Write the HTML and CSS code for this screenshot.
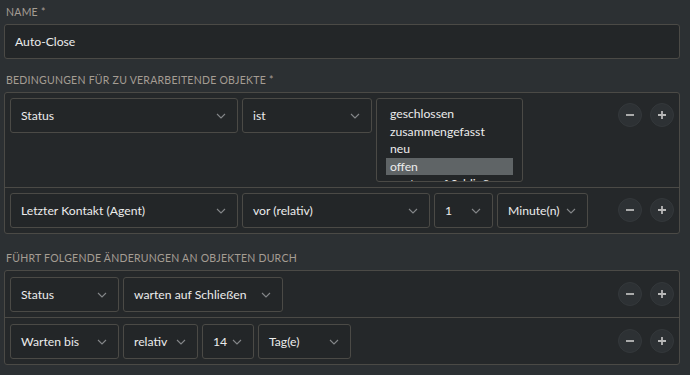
FILE: index.html
```html
<!DOCTYPE html>
<html lang="de">
<head>
<meta charset="utf-8">
<title>Auto-Close</title>
<link rel="stylesheet" href="styles.css">
</head>
<body>
<div class="form">
  <div class="label first">NAME *</div>
  <div class="input">Auto-Close</div>

  <div class="label">BEDINGUNGEN FÜR ZU VERARBEITENDE OBJEKTE *</div>
  <div class="group">
    <div class="row">
      <div class="select w228"><span>Status</span><svg class="chev" viewBox="0 0 10 6"><path d="M1 1L5 5L9 1"/></svg></div>
      <div class="select w130"><span>ist</span><svg class="chev" viewBox="0 0 10 6"><path d="M1 1L5 5L9 1"/></svg></div>
      <div class="multi">
        <div class="opt">geschlossen</div>
        <div class="opt">zusammengefasst</div>
        <div class="opt">neu</div>
        <div class="opt sel">offen</div>
        <div class="opt">warten auf Schließen</div>
      </div>
      <div class="btns">
        <div class="circle"><svg viewBox="0 0 10 10"><path d="M1 5H9"/></svg></div>
        <div class="circle"><svg viewBox="0 0 10 10"><path d="M1 5H9M5 1V9"/></svg></div>
      </div>
    </div>
    <div class="row">
      <div class="select w228"><span>Letzter Kontakt (Agent)</span><svg class="chev" viewBox="0 0 10 6"><path d="M1 1L5 5L9 1"/></svg></div>
      <div class="select w188"><span>vor (relativ)</span><svg class="chev" viewBox="0 0 10 6"><path d="M1 1L5 5L9 1"/></svg></div>
      <div class="select w59"><span>1</span><svg class="chev" viewBox="0 0 10 6"><path d="M1 1L5 5L9 1"/></svg></div>
      <div class="select w91"><span>Minute(n)</span><svg class="chev" viewBox="0 0 10 6"><path d="M1 1L5 5L9 1"/></svg></div>
      <div class="btns">
        <div class="circle"><svg viewBox="0 0 10 10"><path d="M1 5H9"/></svg></div>
        <div class="circle"><svg viewBox="0 0 10 10"><path d="M1 5H9M5 1V9"/></svg></div>
      </div>
    </div>
  </div>

  <div class="label third">FÜHRT FOLGENDE ÄNDERUNGEN AN OBJEKTEN DURCH</div>
  <div class="group actions">
    <div class="row">
      <div class="select w109"><span>Status</span><svg class="chev" viewBox="0 0 10 6"><path d="M1 1L5 5L9 1"/></svg></div>
      <div class="select w160"><span>warten auf Schließen</span><svg class="chev" viewBox="0 0 10 6"><path d="M1 1L5 5L9 1"/></svg></div>
      <div class="btns">
        <div class="circle"><svg viewBox="0 0 10 10"><path d="M1 5H9"/></svg></div>
        <div class="circle"><svg viewBox="0 0 10 10"><path d="M1 5H9M5 1V9"/></svg></div>
      </div>
    </div>
    <div class="row">
      <div class="select w109"><span>Warten bis</span><svg class="chev" viewBox="0 0 10 6"><path d="M1 1L5 5L9 1"/></svg></div>
      <div class="select w75"><span>relativ</span><svg class="chev" viewBox="0 0 10 6"><path d="M1 1L5 5L9 1"/></svg></div>
      <div class="select w52"><span>14</span><svg class="chev" viewBox="0 0 10 6"><path d="M1 1L5 5L9 1"/></svg></div>
      <div class="select w93"><span>Tag(e)</span><svg class="chev" viewBox="0 0 10 6"><path d="M1 1L5 5L9 1"/></svg></div>
      <div class="btns">
        <div class="circle"><svg viewBox="0 0 10 10"><path d="M1 5H9"/></svg></div>
        <div class="circle"><svg viewBox="0 0 10 10"><path d="M1 5H9M5 1V9"/></svg></div>
      </div>
    </div>
  </div>
</div>
</body>
</html>
```

FILE: styles.css
```css
html, body {
  margin: 0;
  padding: 0;
  background: #2c3033;
  height: 100%;
  overflow: hidden;
}
body {
  font-family: Lato, "Open Sans", sans-serif;
  font-size: 12.2px;
  color: #ececec;
}
.form {
  width: 676px;
  margin-left: 4px;
  padding-top: 5px;
}
.label {
  font-size: 10.5px;
  line-height: 14px;
  letter-spacing: 0.25px;
  color: #a59d93;
  padding-left: 2px;
  margin-top: 14px;
  margin-bottom: 5px;
}
.label.first { margin-top: 0; }
.label.third { margin-top: 17px; }
.input {
  box-sizing: border-box;
  height: 35px;
  border: 1px solid #4b4a46;
  border-radius: 3px;
  background: #232628;
  display: flex;
  align-items: center;
  padding-left: 10px;
}
.group {
  border: 1px solid #4b4a46;
  border-radius: 3px;
  background: #25282a;
}
.row {
  display: flex;
  align-items: flex-start;
  gap: 4px;
  padding: 5px;
}
.actions .row { padding-top: 6px; }
.row + .row { border-top: 1px solid #4b4a46; }
.select {
  box-sizing: border-box;
  height: 35px;
  border: 1px solid #4b4a46;
  border-radius: 3px;
  background: #232628;
  display: flex;
  align-items: center;
  justify-content: space-between;
  padding: 0 11px 0 10px;
  white-space: nowrap;
  flex: none;
}
.chev {
  width: 10px;
  height: 6px;
  flex: none;
  fill: none;
  stroke: #85878a;
  stroke-width: 1.1;
}
.w228 { width: 228px; }
.w130 { width: 130px; }
.w188 { width: 188px; }
.w59 { width: 59px; }
.w91 { width: 91px; }
.w109 { width: 109px; }
.w160 { width: 160px; }
.w75 { width: 75px; }
.w52 { width: 52px; }
.w93 { width: 93px; }
.multi {
  box-sizing: border-box;
  width: 147px;
  height: 84px;
  border: 1px solid #4b4a46;
  border-radius: 3px;
  background: #232628;
  padding: 6px 9px 0 9px;
  overflow: hidden;
  flex: none;
}
.opt {
  line-height: 17.5px;
  padding-left: 4px;
  white-space: nowrap;
}
.opt.sel { background: #5f6466; }
.btns {
  margin-left: auto;
  display: flex;
  gap: 8px;
  padding-top: 5px;
}
.circle {
  box-sizing: border-box;
  width: 24px;
  height: 24px;
  border-radius: 50%;
  background: #2d3134;
  border: 1px solid #34383b;
  display: flex;
  align-items: center;
  justify-content: center;
}
.circle svg {
  width: 10px;
  height: 10px;
  fill: none;
  stroke: #b8b8b8;
  stroke-width: 1.8;
}
```
